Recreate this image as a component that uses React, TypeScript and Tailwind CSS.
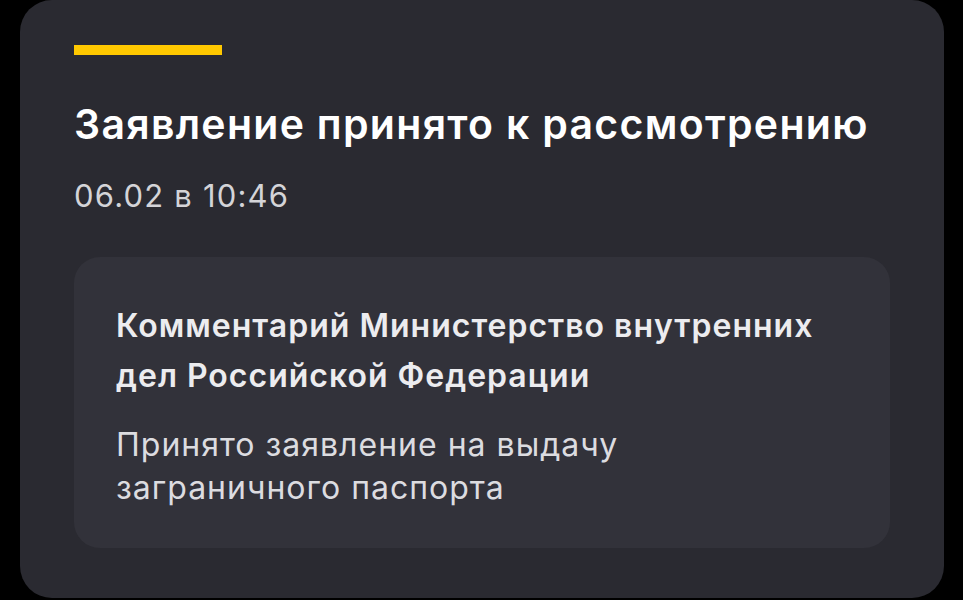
import React from 'react';

export default function App() {
  return (
    <div className="w-[963px] h-[600px] bg-black overflow-hidden" style={{ fontFamily: 'Inter, "Noto Sans", sans-serif' }}>
      <div className="ml-[20px] w-[924px] h-[598px] rounded-[32px] bg-[#2a2a31] pl-[54px] pr-[40px] pt-[45px]">
        <div className="w-[148px] h-[10px] bg-[#ffc800]" />
        <h1 className="mt-[45px] text-[41px] leading-[48px] font-semibold text-white tracking-[1.3px] whitespace-nowrap">
          Заявление принято к рассмотрению
        </h1>
        <div className="mt-[30px] text-[31px] leading-[36px] text-[#d4d4d8] tracking-[1.2px]">06.02 в 10:46</div>
        <div className="mt-[43px] w-[816px] h-[291px] rounded-[26px] bg-[#32323a] px-[42px] pt-[44px]">
          <div className="text-[32px] leading-[50px] font-semibold text-[#ececef] tracking-[1px] whitespace-nowrap">
            Комментарий Министерство внутренних
            <br />
            дел Российской Федерации
          </div>
          <div className="mt-[22px] text-[32px] leading-[43px] text-[#dcdce0] tracking-[1px]">
            Принято заявление на выдачу
            <br />
            заграничного паспорта
          </div>
        </div>
      </div>
    </div>
  );
}
